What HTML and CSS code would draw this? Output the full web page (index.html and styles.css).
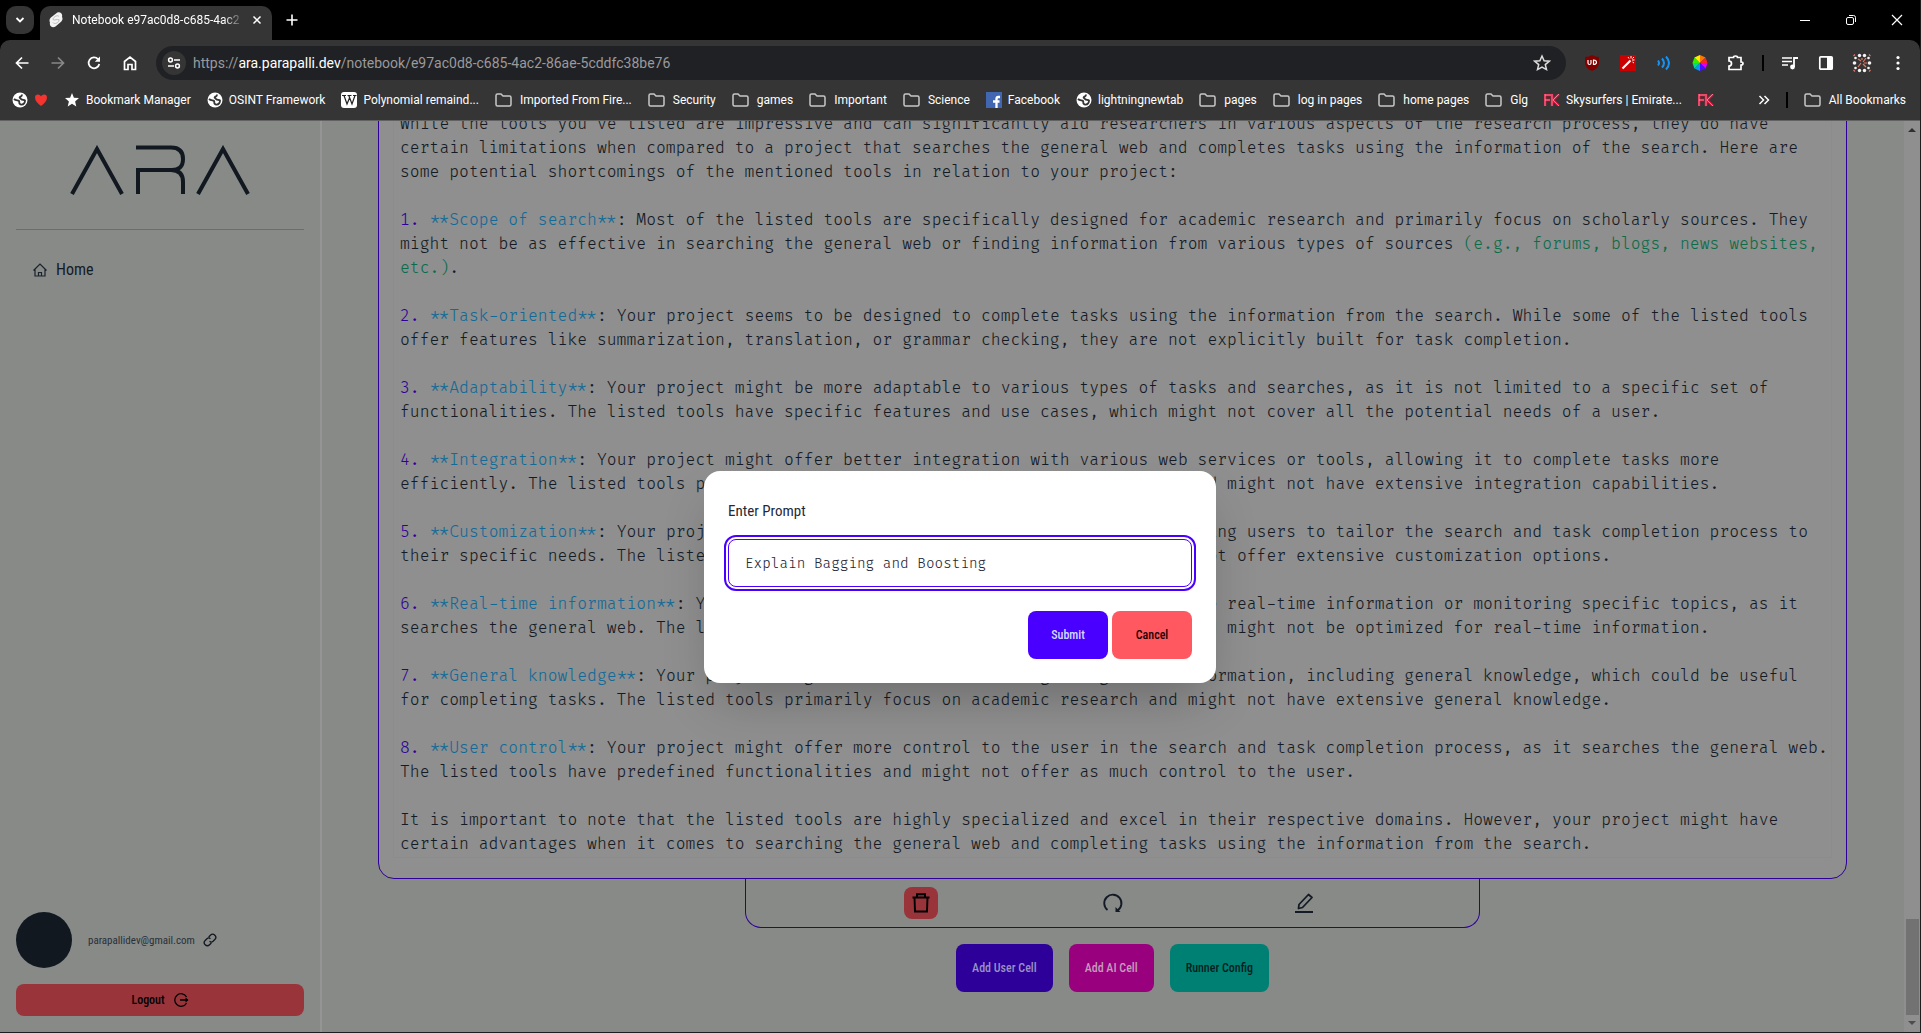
FILE: index.html
```html
<!DOCTYPE html>
<html lang="en">
<head>
<meta charset="utf-8">
<title>Notebook e97ac0d8-c685-4ac2</title>
<link rel="stylesheet" href="styles.css">
</head>
<body>
<svg class="sprite" aria-hidden="true">
  <symbol id="globe" viewBox="0 0 16 16"><circle cx="8" cy="8" r="7.5" fill="#fff"/><path d="M2 7c2 2 4 1 5 2s-1 3 2 3.500c3 .3 4-2 4-4-1-1-3 0-4-1.500S7 6 8 5s2 0 2-2.500" fill="none" stroke="#353535" stroke-width="1.800"/></symbol>
  <symbol id="folder" viewBox="0 0 17 16"><path d="M1 3.500Q1 2 2.500 2H6l2 2h6.500Q16 4 16 5.500v7q0 1.500-1.500 1.500h-12Q1 14 1 12.500z" fill="none" stroke="#c7c7c7" stroke-width="1.500"/></symbol>
  <symbol id="fk" viewBox="0 0 16 12"><path d="M1 0v12M1 1h6M1 6h5M8 0v12M15 0 9 6l6 6" fill="none" stroke="#e0143c" stroke-width="2.600"/><path d="M1 0v12M1 1h6M1 6h5M8 0v12M15 0 9 6l6 6" fill="none" stroke="#f8c8d0" stroke-width=".6"/></symbol>
</svg>

<header class="browser">
  <div class="tabs">
    <button class="tab-search" aria-label="Search tabs"><svg width="10" height="10" viewBox="0 0 10 10"><path d="m1.500 3 3.500 3.500L8.500 3" fill="none" stroke="#fff" stroke-width="1.800"/></svg></button>
    <div class="tab">
      <svg width="16" height="16" viewBox="0 0 16 16"><path d="M9 .8c3-1.500 6 1 5 4 1 2 .5 4-1.500 5.500L7.500 14.500c-3 2-6.500-.5-5.500-4C1 8.500 1.500 6.500 3.500 5z" fill="#f2f2f2"/><path d="M5 7.500C5 5 9.500 2.500 11 4.500M11 7.500c.5 3-4.500 5.500-6 3M5 7.500c1.500 1.500 4.500-1 6 .5" fill="none" stroke="#bbb" stroke-width="1"/></svg>
      <span class="tab-title">Notebook e97ac0d8-c685-4ac2</span>
      <button class="tab-close" aria-label="Close tab"><svg width="10" height="10" viewBox="0 0 10 10"><path d="m1.500 1.500 7 7m0-7-7 7" stroke="#fff" stroke-width="1.500"/></svg></button>
    </div>
    <button class="new-tab" aria-label="New tab"><svg width="12" height="12" viewBox="0 0 12 12"><path d="M6 .5v11M.5 6h11" stroke="#fff" stroke-width="1.600"/></svg></button>
    <div class="window-controls">
      <button aria-label="Minimize"><svg width="12" height="12" viewBox="0 0 12 12"><path d="M1 6.500h10" stroke="#fff"/></svg></button>
      <button aria-label="Restore"><svg width="12" height="12" viewBox="0 0 12 12"><rect x="1.500" y="3.500" width="7" height="7" rx="1.500" fill="none" stroke="#fff"/><path d="M4 1.500h4.500q2 0 2 2V8" fill="none" stroke="#fff"/></svg></button>
      <button aria-label="Close"><svg width="12" height="12" viewBox="0 0 12 12"><path d="m1 1 10 10M11 1 1 11" stroke="#fff" stroke-width="1.200"/></svg></button>
    </div>
  </div>

  <div class="toolbar">
    <button aria-label="Back"><svg width="16" height="16" viewBox="0 0 16 16"><path d="M14.500 8H2.500M8 2.500 2.500 8 8 13.500" fill="none" stroke="#fff" stroke-width="1.700"/></svg></button>
    <button aria-label="Forward"><svg width="16" height="16" viewBox="0 0 16 16"><path d="M1.500 8h12M8 2.500 13.500 8 8 13.500" fill="none" stroke="#888" stroke-width="1.700"/></svg></button>
    <button aria-label="Reload"><svg width="16" height="16" viewBox="0 0 16 16"><path d="M13.300 9A5.400 5.400 0 1 1 12 4.200" fill="none" stroke="#fff" stroke-width="1.800"/><path d="M14 1.500v5.300H8.800z" fill="#fff"/></svg></button>
    <button aria-label="Home"><svg width="16" height="16" viewBox="0 0 16 16"><path d="M2.500 6.500 8 2l5.500 4.500v8H10V9.500H6v5H2.500z" fill="none" stroke="#fff" stroke-width="1.700"/></svg></button>
    <div class="omnibox">
      <button class="site-info" aria-label="Site information"><svg width="14" height="14" viewBox="0 0 14 14"><circle cx="3.500" cy="4" r="1.900" fill="none" stroke="#fff" stroke-width="1.500"/><circle cx="10.500" cy="10" r="1.900" fill="none" stroke="#fff" stroke-width="1.500"/><path d="M7 4h6M1 10h6" stroke="#fff" stroke-width="1.600"/></svg></button>
      <span class="url">https://<b>ara.parapalli.dev</b>/notebook/e97ac0d8-c685-4ac2-86ae-5cddfc38be76</span>
      <button class="bookmark-star" aria-label="Bookmark this page"><svg width="18" height="18" viewBox="0 0 18 18"><path d="m9 2 2.100 4.700 5.100.5-3.900 3.400 1.200 5L9 13l-4.500 2.600 1.200-5L1.800 7.200l5.100-.5z" fill="none" stroke="#ddd" stroke-width="1.500"/></svg></button>
    </div>
    <div class="extensions">
      <button aria-label="uBlock"><svg width="16" height="16" viewBox="0 0 16 16"><path d="M8 0q3 2 7 2v6q0 5-7 8-7-3-7-8V2q4 0 7-2z" fill="#800000"/><path d="M4 5v3q0 1.500 1.500 1.500T7 8V5M9.500 5v4.500q3 0 3-2.200T9.500 5z" fill="none" stroke="#fff" stroke-width="1.200"/></svg></button>
      <button aria-label="Magic wand"><svg width="16" height="16" viewBox="0 0 16 16"><path d="M0 0h16v16H0z" fill="#c00"/><path d="m2.500 13.500 8-8" stroke="#fff" stroke-width="2.200"/><path d="M11 1v2.500M8 2l1 1.500M14.500 5H12m2-3-1.500 1.500M14 8l-1.500-1" stroke="#fff"/></svg></button>
      <button aria-label="Read aloud"><svg width="16" height="16" viewBox="0 0 16 16"><path d="M2 5.500q2 2.500 0 5M6 3.500q4 4.500 0 9M10 1.500q6 6.500 0 13" fill="none" stroke="#1593f5" stroke-width="2"/></svg></button>
      <button aria-label="Colour picker"><svg width="16" height="16" viewBox="0 0 16 16"><path d="M8 8V0l5.600 2.400z" fill="#f70"/><path d="M8 8l5.600-5.600L15.500 8z" fill="#f22"/><path d="M8 8h7.500l-1.900 5.600z" fill="#d0f"/><path d="M8 8l5.600 5.600L8 16z" fill="#41f"/><path d="M8 8v8l-5.600-2.400z" fill="#09f"/><path d="M8 8l-5.600 5.600L.5 8z" fill="#0d8"/><path d="M8 8H.5l1.900-5.600z" fill="#3e0"/><path d="M8 8 2.400 2.400 8 0z" fill="#fe0"/></svg></button>
      <button aria-label="Extensions"><svg width="16" height="16" viewBox="0 0 16 16"><path d="M1 2.500h4.500q0-1.500 2-1.500t2 1.500h3.500V7q2 0 2 1.500T13 10v4.500H1V11q2.500 0 2.500-2.500T1 6z" fill="none" stroke="#fff" stroke-width="1.700"/></svg></button>
      <span class="divider"></span>
      <button aria-label="Media control"><svg width="16" height="16" viewBox="0 0 16 16"><path d="M0 3h10M0 6.500h10M0 10h6" stroke="#fff" stroke-width="1.600"/><path d="M12 12V3h4" fill="none" stroke="#fff" stroke-width="1.800"/><circle cx="10.500" cy="12" r="2.400" fill="#fff"/></svg></button>
      <button aria-label="Side panel"><svg width="16" height="16" viewBox="0 0 16 16"><rect x="1.800" y="1.800" width="12.400" height="12.400" rx="1" fill="none" stroke="#fff" stroke-width="1.700"/><path d="M9 2h5v12H9z" fill="#fff"/></svg></button>
      <button aria-label="Profile"><svg width="20" height="20" viewBox="0 0 20 20"><g fill="#f4f4f4"><circle cx="7.500" cy="2.500" r="1.700"/><circle cx="12.500" cy="2.500" r="1.700"/><circle cx="3.500" cy="5" r="1.300"/><circle cx="16.500" cy="5" r="1.300"/><circle cx="2.500" cy="10" r="1.800"/><circle cx="17.500" cy="10" r="1.800"/><circle cx="3.500" cy="15" r="1.300"/><circle cx="16.500" cy="15" r="1.300"/><circle cx="7.500" cy="17.500" r="1.700"/><circle cx="12.500" cy="17.500" r="1.700"/></g><path d="m6 6 3 2M14 5l-3 4M14 14l-3-3M6 14l3-4M10 5v2M15 10h-3M3 1.500 1.500 3M17 1.500 18.500 3M3 18.500 1.500 17M17 18.500l1.500-1.500" stroke="#e07868" stroke-width="1.200"/></svg></button>
      <button aria-label="Menu"><svg width="4" height="16" viewBox="0 0 4 16"><g fill="#fff"><circle cx="2" cy="2.500" r="1.600"/><circle cx="2" cy="8" r="1.600"/><circle cx="2" cy="13.500" r="1.600"/></g></svg></button>
    </div>
  </div>

  <nav class="bookmarks" aria-label="Bookmarks">
    <a href="#" class="site" aria-label="Favourites"><svg width="16" height="16"><use href="#globe"/></svg><svg width="14" height="14" viewBox="0 0 14 14"><path d="M7 13Q1 8.500 1 4.500 1 1.500 4 1.500q2 0 3 1.700 1-1.700 3-1.700 3 0 3 3Q13 8.500 7 13z" fill="#f4342e"/></svg></a>
    <a href="#" class="site"><svg width="16" height="16" viewBox="-1 -1 16 16"><path d="m7 0 1.900 4.700 5.100.4-3.900 3.300 1.200 5L7 10.700l-4.300 2.700 1.200-5L0 5.100l5.100-.4z" fill="#fff"/></svg>Bookmark Manager</a>
    <a href="#" class="site"><svg width="16" height="16"><use href="#globe"/></svg>OSINT Framework</a>
    <a href="#" class="site"><svg width="16" height="16" viewBox="0 0 16 16"><rect width="16" height="16" rx="3" fill="#fff"/><path d="M1 3.500h4M6.500 3.500h4M12 3.500h3.500M3 3.500 6 12l2.500-6M7.800 3.500 11 12l3-8.500" fill="none" stroke="#222" stroke-width="1.200"/></svg>Polynomial remaind...</a>
    <a href="#"><svg width="17" height="16"><use href="#folder"/></svg>Imported From Fire...</a>
    <a href="#"><svg width="17" height="16"><use href="#folder"/></svg>Security</a>
    <a href="#"><svg width="17" height="16"><use href="#folder"/></svg>games</a>
    <a href="#"><svg width="17" height="16"><use href="#folder"/></svg>Important</a>
    <a href="#"><svg width="17" height="16"><use href="#folder"/></svg>Science</a>
    <a href="#" class="site"><svg width="16" height="16" viewBox="0 0 16 16"><path d="M0 0h16v16H0z" fill="#4267b2"/><path d="M10.500 16V7q0-2 1.800-2H14M7 9.500h6.500" fill="none" stroke="#fff" stroke-width="2.300"/></svg>Facebook</a>
    <a href="#" class="site"><svg width="16" height="16"><use href="#globe"/></svg>lightningnewtab</a>
    <a href="#"><svg width="17" height="16"><use href="#folder"/></svg>pages</a>
    <a href="#"><svg width="17" height="16"><use href="#folder"/></svg>log in pages</a>
    <a href="#"><svg width="17" height="16"><use href="#folder"/></svg>home pages</a>
    <a href="#"><svg width="17" height="16"><use href="#folder"/></svg>Glg</a>
    <a href="#" class="site"><svg width="16" height="12"><use href="#fk"/></svg>Skysurfers | Emirate...</a>
    <a href="#" class="site" aria-label="Emirates"><svg width="16" height="12"><use href="#fk"/></svg></a>
    <div class="bookmarks-end">
      <button aria-label="More bookmarks"><svg width="12" height="10" viewBox="0 0 12 10"><path d="m1.500 1 4 4-4 4M6.500 1l4 4-4 4" fill="none" stroke="#fff" stroke-width="1.500"/></svg></button>
      <span class="divider"></span>
      <a href="#"><svg width="17" height="16"><use href="#folder"/></svg>All Bookmarks</a>
    </div>
  </nav>
</header>

<div class="app">
  <aside class="sidebar">
    <svg class="logo" width="180" height="50" viewBox="0 0 180 50" role="img" aria-label="ARA"><path d="M2 49 27 4l25 45M66 2.500h35q12 0 12 11.500T101 25H68v24M101 25q12 0 12 12v12M128 49l25-45 25 45" fill="none" stroke="#111820" stroke-width="4"/></svg>
    <nav class="side-nav">
      <a href="#"><svg width="16" height="16" viewBox="0 0 16 16"><path d="M1.500 8.500 8 2l6.500 6.500M3 7.500V14h10V7.500M6.500 14v-3.500h3V14" fill="none" stroke="#1a222c" stroke-width="1.200"/></svg>Home</a>
    </nav>
    <div class="account">
      <span class="avatar"></span>
      <span class="email">parapallidev@gmail.com</span>
      <a href="#" aria-label="Link"><svg width="14" height="14" viewBox="0 0 16 16"><path d="m6.500 4.500 2-2a3.300 3.300 0 0 1 5 5l-2 2a3 3 0 0 1-4 0M9.500 11.500l-2 2a3.300 3.300 0 0 1-5-5l2-2a3 3 0 0 1 4 0" fill="none" stroke="#111820" stroke-width="1.500"/></svg></a>
    </div>
    <button class="btn logout">Logout<svg width="16" height="16" viewBox="0 0 16 16"><path d="M13.600 5A6.300 6.300 0 1 0 13.600 11M7 8h7.500" fill="none" stroke="#000" stroke-width="1.300"/><path d="M12.500 5.500 15.500 8l-3 2.500z" fill="#000"/></svg></button>
  </aside>

  <main class="notebook">
    <section class="cell">
<pre class="cell-text">While the tools you've listed are impressive and can significantly aid researchers in various aspects of the research process, they do have
certain limitations when compared to a project that searches the general web and completes tasks using the information of the search. Here are
some potential shortcomings of the mentioned tools in relation to your project:

<i>1.</i> <b>**Scope of search**</b>: Most of the listed tools are specifically designed for academic research and primarily focus on scholarly sources. They
might not be as effective in searching the general web or finding information from various types of sources <em>(e.g., forums, blogs, news websites,
etc.)</em>.

<i>2.</i> <b>**Task-oriented**</b>: Your project seems to be designed to complete tasks using the information from the search. While some of the listed tools
offer features like summarization, translation, or grammar checking, they are not explicitly built for task completion.

<i>3.</i> <b>**Adaptability**</b>: Your project might be more adaptable to various types of tasks and searches, as it is not limited to a specific set of
functionalities. The listed tools have specific features and use cases, which might not cover all the potential needs of a user.

<i>4.</i> <b>**Integration**</b>: Your project might offer better integration with various web services or tools, allowing it to complete tasks more
efficiently. The listed tools primarily focus on specific functionalities alone and might not have extensive integration capabilities.

<i>5.</i> <b>**Customization**</b>: Your project might provide more customization options, allowing users to tailor the search and task completion process to
their specific needs. The listed tools have predefined functionalities and might not offer extensive customization options.

<i>6.</i> <b>**Real-time information**</b>: Your project might be better suited to providing some real-time information or monitoring specific topics, as it
searches the general web. The listed tools primarily focus on academic research and might not be optimized for real-time information.

<i>7.</i> <b>**General knowledge**</b>: Your project might access a broader range of general information, including general knowledge, which could be useful
for completing tasks. The listed tools primarily focus on academic research and might not have extensive general knowledge.

<i>8.</i> <b>**User control**</b>: Your project might offer more control to the user in the search and task completion process, as it searches the general web.
The listed tools have predefined functionalities and might not offer as much control to the user.

It is important to note that the listed tools are highly specialized and excel in their respective domains. However, your project might have
certain advantages when it comes to searching the general web and completing tasks using the information from the search.</pre>
    </section>
    <div class="cell-tools">
      <button class="delete" aria-label="Delete cell"><svg width="20" height="20" viewBox="0 0 20 20"><path d="M1.500 4.500h17M6 4.500V1.200h8v3.300M3.500 4.500 4 18.500h12l.5-14" fill="none" stroke="#000" stroke-width="1.900"/></svg></button>
      <button aria-label="Run cell"><svg width="20" height="20" viewBox="0 0 20 20"><path d="M4.500 17A8.600 8.600 0 1 1 14.500 17.500" fill="none" stroke="#151b25" stroke-width="1.900"/><path d="M12.500 14v5h5z" fill="#151b25"/></svg></button>
      <button aria-label="Edit cell"><svg width="20" height="20" viewBox="0 0 20 20"><path d="M4.500 15.500 5 11.500 14.500 1.500 18 4.500 8.500 14.500zM1 19h18" fill="none" stroke="#151b25" stroke-width="1.800" stroke-linejoin="round"/></svg></button>
    </div>
    <div class="add-row">
      <button class="btn dim-primary">Add User Cell</button>
      <button class="btn dim-secondary">Add AI Cell</button>
      <button class="btn dim-accent">Runner Config</button>
    </div>
  </main>

  <div class="scrollbar" aria-hidden="true"><span class="up"></span><span class="thumb"></span><span class="down"></span></div>
</div>

<form class="modal" role="dialog" aria-labelledby="prompt-label">
  <label id="prompt-label" for="prompt">Enter Prompt</label>
  <input id="prompt" type="text" value="Explain Bagging and Boosting">
  <div class="modal-actions">
    <button type="button" class="btn primary">Submit</button>
    <button type="button" class="btn error">Cancel</button>
  </div>
</form>
</body>
</html>
```
FILE: styles.css
```css
* { box-sizing: border-box; }

body {
  margin: 0;
  padding: 0 1px 1px 0;
  height: 100vh;
  display: grid;
  grid-template-columns: minmax(0, 1fr);
  grid-template-rows: auto minmax(0, 1fr);
  background: #1e1e20;
  font-family: "Roboto Condensed", "Roboto", sans-serif;
  color: #151b25;
  overflow: hidden;
}

button { border: 0; padding: 0; background: none; font: inherit; color: inherit; display: flex; align-items: center; justify-content: center; flex: none; }
a { color: inherit; text-decoration: none; }
svg { display: block; flex: none; }
.sprite { position: absolute; width: 0; height: 0; }

/* Browser frame */
.browser { background: #000; color: #fff; font: 12px "Roboto", sans-serif; border-bottom: 1px solid #626262; }
.tabs { height: 40px; padding: 6px 0 0 6px; display: flex; }
.tab-search { width: 28px; height: 28px; border-radius: 10px; background: #353535; }
.tab { width: 232px; margin-left: 6px; padding: 0 10px 6px 8px; border-radius: 10px 10px 0 0; background: #353535; display: flex; align-items: center; gap: 8px; }
.tab-title { flex: 1; overflow: hidden; white-space: nowrap; mask-image: linear-gradient(90deg, #000 88%, transparent); }
.new-tab { width: 28px; height: 28px; margin-left: 6px; }
.window-controls { margin-left: auto; display: flex; height: 28px; }
.window-controls button { width: 46px; }

.toolbar { height: 46px; padding: 0 4px; background: #353535; border-radius: 10px 10px 0 0; display: flex; align-items: center; }
.toolbar button { width: 36px; height: 34px; }
.omnibox { flex: 1; height: 34px; margin: 0 8px; padding: 0 6px; border-radius: 17px; background: #202124; display: flex; align-items: center; }
.toolbar .site-info { width: 24px; height: 24px; border-radius: 12px; background: #353535; }
.url { flex: 1; margin-left: 7px; font-size: 14px; color: #9a9a9c; }
.url b { font-weight: 400; color: #fff; }
.extensions { display: flex; align-items: center; }
.divider { width: 2px; height: 16px; margin: 0 8px; background: #000; }

.bookmarks { height: 34px; padding: 0 14px 6px 12px; background: #353535; display: flex; align-items: center; gap: 16px; white-space: nowrap; }
.bookmarks a { display: flex; align-items: center; gap: 8px; }
.bookmarks .site { gap: 6px; }
.bookmarks-end { margin-left: auto; display: flex; align-items: center; gap: 8px; }

/* App layout */
.app { display: grid; grid-template-columns: 322px minmax(0, 1fr) 16px; min-height: 0; background: #888a88; }

.sidebar { padding: 24px 16px 16px; border-right: 2px solid #949594; display: flex; flex-direction: column; }
.logo { align-self: center; }
.side-nav { margin-top: 34px; border-top: 1px solid #6b6d6b; padding: 28px 16px; }
.side-nav a { display: flex; align-items: center; gap: 8px; font-size: 16px; line-height: 24px; }
.account { margin-top: auto; display: flex; align-items: center; font-size: 11px; }
.avatar { width: 56px; height: 56px; border-radius: 50%; background: #111820; }
.email { margin: 0 8px 0 16px; color: #2a3038; }

.btn { height: 48px; padding: 0 16px; border-radius: 8px; font-size: 12px; font-weight: 500; }
.logout { height: 32px; margin-top: 16px; gap: 8px; background: #99353a; color: #000; }

.notebook { padding: 0 57px 40px 56px; display: flex; flex-direction: column; justify-content: flex-end; align-items: center; overflow: hidden; }
.cell { flex: none; align-self: stretch; padding: 16px 14px 20px; border: 1px solid #2e0099; border-radius: 16px; background: #8f8f8f; }
.cell-text { margin: 0; padding: 0 6px 1px; border: 1px solid #8c8c8c; font: 300 16px/24px "Fira Code", "Liberation Mono", monospace; }
.cell-text i { font-style: normal; color: #2e0099; }
.cell-text b { font-weight: 300; color: #126a96; }
.cell-text em { font-style: normal; color: #0d6b48; }

.cell-tools { flex: none; width: 50%; height: 49px; border: 1px solid #2e0099; border-top: 0; border-radius: 0 0 16px 16px; display: flex; align-items: center; justify-content: space-evenly; }
.cell-tools button { width: 34px; height: 32px; border-radius: 8px; }
.cell-tools .delete { background: #99353a; }

.add-row { flex: none; margin-top: 16px; display: flex; gap: 16px; }
.dim-primary { background: #2c0099; color: #9a8fc4; }
.dim-secondary { background: #99007d; color: #c49abb; }
.dim-accent { background: #008073; color: #04211e; }

.scrollbar { background: #8f8f8f; display: flex; flex-direction: column; align-items: center; padding: 7px 0; }
.up { border: 4px solid transparent; border-top: 0; border-bottom-color: #303030; }
.down { margin-top: 6px; border: 4px solid transparent; border-bottom: 0; border-top-color: #4d4d4d; }
.thumb { width: 13px; height: 96px; margin-top: auto; background: #727272; }

/* Prompt dialog, centred over the page */
.modal { position: absolute; inset: 471px 1px auto 0; margin: 0 auto; width: 512px; padding: 24px; border-radius: 16px; background: #fff; box-shadow: 0 25px 50px -12px rgba(0, 0, 0, .25); }
.modal label { display: block; padding: 4px 0; line-height: 24px; font-size: 15px; color: #1f2937; }
.modal input { display: block; width: 100%; height: 48px; margin: 12px 0 24px; padding: 0 16px; border: 1px solid #4a00ff; border-radius: 8px; outline: 2px solid #4a00ff; outline-offset: 2px; font: 300 14px "Fira Code", "Liberation Mono", monospace; color: #1f2937; }
.modal-actions { display: flex; justify-content: flex-end; gap: 4px; }
.modal-actions .btn { width: 80px; }
.primary { background: #4a00ff; color: #d1dbff; }
.error { background: #ff5861; color: #160202; }
```
